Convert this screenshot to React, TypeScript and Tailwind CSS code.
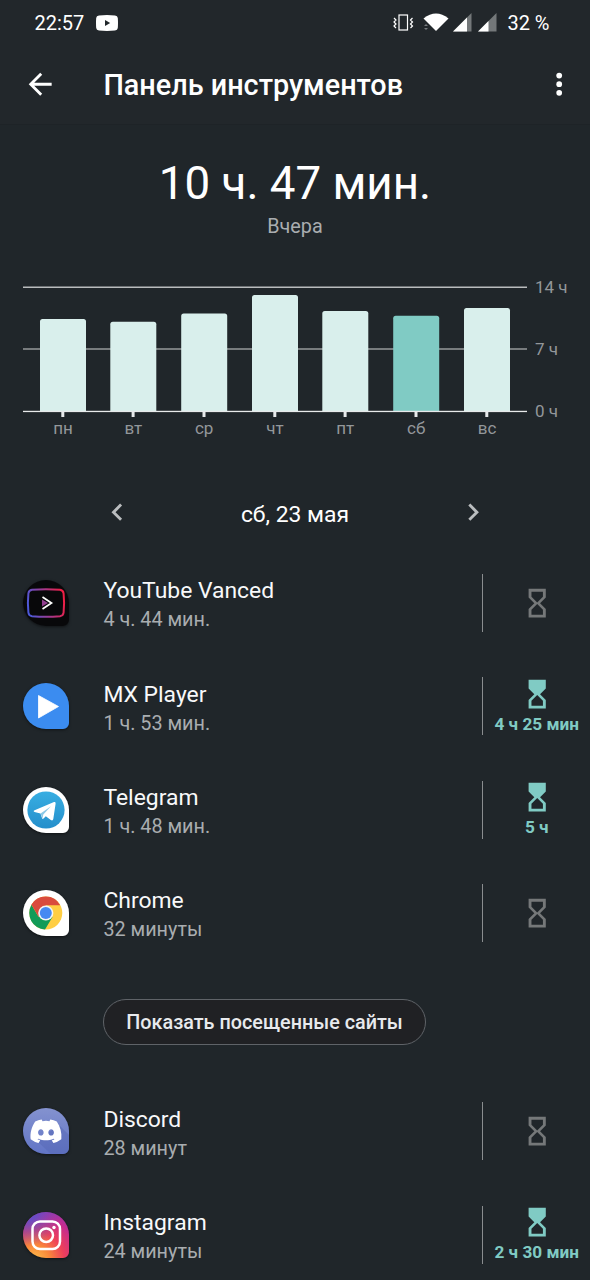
import React from 'react';

interface AppUsage {
  name: string;
  time: string;
  limit?: string;
  icon: React.ReactNode;
}

interface DayUsage {
  label: string;
  x: number;
  top: number;
  selected?: boolean;
}

const days: DayUsage[] = [
  { label: 'пн', x: 40, top: 49 },
  { label: 'вт', x: 110.3, top: 51.7 },
  { label: 'ср', x: 181.2, top: 43.5 },
  { label: 'чт', x: 252, top: 25 },
  { label: 'пт', x: 322.3, top: 41 },
  { label: 'сб', x: 393.2, top: 45.7, selected: true },
  { label: 'вс', x: 464, top: 38 },
];

const VancedIcon = () => (
  <svg viewBox="0 0 46 46" className="h-full w-full">
    <defs>
      <linearGradient id="vanced" x1="0" y1="0.6" x2="1" y2="0.4">
        <stop offset="0" stopColor="#4c58d8" />
        <stop offset="0.5" stopColor="#a03a90" />
        <stop offset="1" stopColor="#ef1f45" />
      </linearGradient>
    </defs>
    <path d="M9 9.800Q23 8.600 37 9.800Q40.300 10.300 40.600 13.500Q41.600 23 40.600 32.500Q40.300 35.700 37 36.200Q23 37.400 9 36.200Q5.700 35.700 5.400 32.500Q4.400 23 5.400 13.500Q5.700 10.300 9 9.800Z" fill="none" stroke="url(#vanced)" strokeWidth="2" />
    <path d="M19 19.500L25 23L19 26.500Z" fill="#92408f" />
    <path d="M19.500 17L28.500 23L19.500 29" fill="none" stroke="#fff" strokeWidth="1.700" />
  </svg>
);

const MxIcon = () => (
  <svg viewBox="0 0 46 46" className="h-full w-full">
    <path d="M15.500 12.500L35.500 23.500L15.500 35Z" fill="#fff" stroke="#fff" strokeWidth="0.8" strokeLinejoin="round" />
  </svg>
);

const TelegramIcon = () => (
  <svg viewBox="0 0 46 46" className="h-full w-full">
    <defs>
      <linearGradient id="telegram" x1="0" y1="0" x2="0" y2="1">
        <stop offset="0" stopColor="#38aee2" />
        <stop offset="1" stopColor="#258fcb" />
      </linearGradient>
    </defs>
    <circle cx="23" cy="23" r="18.600" fill="url(#telegram)" />
    <path d="M11 23.500L31 15Q33 14.500 32.600 16.800L30.300 32Q29.800 34.200 27.800 33L22.800 29.200L20.500 31.600Q19.500 32.500 19 31L17.500 26.500L11.500 25Q10 24.300 11 23.500Z" fill="#fff" />
    <path d="M17.500 26.500L28 19.300L20.300 27.400L19.500 31.600Z" fill="#8cc8e6" />
  </svg>
);

const ChromeIcon = () => (
  <svg viewBox="0 0 46 46" className="h-full w-full">
    <circle cx="22.800" cy="23" r="16.500" fill="#ffce43" />
    <path d="M22.800 23L8.500 14.700A16.500 16.500 0 0 1 37.200 15.200H22.800Z" fill="#d94b3d" />
    <path d="M8.500 14.700A16.500 16.500 0 0 0 22 39.500L29.500 27L22.800 23L15.500 26.800Z" fill="#129b58" />
    <path d="M8.500 14.700L15.500 26.800L22.800 15.200L12 11Z" fill="#d94b3d" />
    <circle cx="22.800" cy="23" r="7.600" fill="#f4f4f4" />
    <circle cx="22.800" cy="23" r="6" fill="#4689f2" />
  </svg>
);

const DiscordIcon = () => (
  <svg viewBox="0 0 46 46" className="h-full w-full">
    <path d="M12 31L28 46H46V27L37 18Z" fill="#5668b6" opacity="0.5" />
    <path
      transform="translate(7.500 7.800) scale(1.290)"
      d="M20.317 4.370a19.791 19.791 0 0 0-4.885-1.515.074.074 0 0 0-.079.037c-.21.375-.444.864-.608 1.250a18.270 18.270 0 0 0-5.487 0 12.640 12.640 0 0 0-.617-1.250.077.077 0 0 0-.079-.037A19.736 19.736 0 0 0 3.677 4.370a.07.07 0 0 0-.032.027C.533 9.046-.32 13.580.099 18.057a.082.082 0 0 0 .031.057 19.900 19.900 0 0 0 5.993 3.030.078.078 0 0 0 .084-.028c.462-.63.874-1.295 1.226-1.994a.076.076 0 0 0-.041-.106 13.107 13.107 0 0 1-1.872-.892.077.077 0 0 1-.008-.128c.126-.094.252-.192.372-.292a.074.074 0 0 1 .077-.01c3.928 1.793 8.180 1.793 12.062 0a.074.074 0 0 1 .078.01c.12.098.246.198.373.292a.077.077 0 0 1-.006.127 12.299 12.299 0 0 1-1.873.892.077.077 0 0 0-.041.107c.36.698.772 1.362 1.225 1.993a.076.076 0 0 0 .084.028 19.839 19.839 0 0 0 6.002-3.030.077.077 0 0 0 .032-.054c.5-5.177-.838-9.674-3.549-13.660a.061.061 0 0 0-.031-.030zM8.020 15.330c-1.183 0-2.157-1.085-2.157-2.419 0-1.333.956-2.419 2.157-2.419 1.210 0 2.176 1.096 2.157 2.420 0 1.333-.956 2.418-2.157 2.418zm7.975 0c-1.183 0-2.157-1.085-2.157-2.419 0-1.333.955-2.419 2.157-2.419 1.210 0 2.176 1.096 2.157 2.420 0 1.333-.946 2.418-2.157 2.418z"
      fill="#fff"
    />
  </svg>
);

const InstagramIcon = () => (
  <svg viewBox="0 0 46 46" className="h-full w-full" fill="none" stroke="#fff">
    <rect x="9.500" y="9.500" width="27.500" height="27.500" rx="7.500" strokeWidth="2.500" />
    <circle cx="23.200" cy="23.200" r="6.800" strokeWidth="2.500" />
    <circle cx="31" cy="15.500" r="1.700" fill="#fff" stroke="none" />
  </svg>
);

const apps: AppUsage[] = [
  { name: 'YouTube Vanced', time: '4 ч. 44 мин.', icon: <div className="h-full w-full bg-[#08080a]"><VancedIcon /></div> },
  { name: 'MX Player', time: '1 ч. 53 мин.', limit: '4 ч 25 мин', icon: <div className="h-full w-full bg-[#3b8cf0]"><MxIcon /></div> },
  { name: 'Telegram', time: '1 ч. 48 мин.', limit: '5 ч', icon: <div className="h-full w-full bg-white"><TelegramIcon /></div> },
  { name: 'Chrome', time: '32 минуты', icon: <div className="h-full w-full bg-white"><ChromeIcon /></div> },
];

const moreApps: AppUsage[] = [
  { name: 'Discord', time: '28 минут', icon: <div className="h-full w-full bg-linear-to-b from-[#8492cf] to-[#6275c6]"><DiscordIcon /></div> },
  {
    name: 'Instagram',
    time: '24 минуты',
    limit: '2 ч 30 мин',
    icon: (
      <div className="h-full w-full bg-[radial-gradient(circle_at_25%_105%,#fdc04d_0%,#fa8a3a_25%,#ee3f5a_50%,#c62c8e_75%,#8a38b8_100%)]">
        <div className="h-full w-full bg-[radial-gradient(circle_at_10%_0%,#4a55d8_0%,#4a55d800_55%)]">
          <InstagramIcon />
        </div>
      </div>
    ),
  },
];

const Hourglass: React.FC<{ active: boolean }> = ({ active }) => (
  <svg viewBox="0 0 24 24" className={active ? 'h-[34.4px] w-[34.4px] fill-[#80cbc4]' : 'h-[34.4px] w-[34.4px] fill-[#757879]'}>
    {active ? (
      <path d="M6 2v6l4 4-4 4v6h12v-6l-4-4 4-4V2H6zm10 14.500V20H8v-3.500l4-4 4 4z" />
    ) : (
      <path d="M6 2v6l4 4-4 4v6h12v-6l-4-4 4-4V2H6zm10 14.500V20H8v-3.500l4-4 4 4zm-4-5l-4-4V4h8v3.500l-4 4z" />
    )}
  </svg>
);

const AppRow: React.FC<{ app: AppUsage }> = ({ app }) => (
  <div className="flex h-[103.3px] items-center pl-[23px]">
    <div className="h-[46px] w-[46px] overflow-hidden rounded-[23px] rounded-br-[6px] shadow-[0_1px_3px_rgba(0,0,0,0.5)]">{app.icon}</div>
    <div className="ml-[34.4px] flex-1 pt-[3.6px]">
      <div className="text-[22.9px] leading-[30px] text-[#f8f9fa]">{app.name}</div>
      <div className="text-[19.8px] leading-[27px] text-[#a9adb0]">{app.time}</div>
    </div>
    <div className="h-[58px] w-[1.5px] bg-[#8a8d8f]" />
    <div className="flex w-[106.6px] flex-col items-center">
      <Hourglass active={!!app.limit} />
      {app.limit && <div className="mt-px text-[17.2px] leading-[24px] font-bold whitespace-nowrap text-[#80cbc4]">{app.limit}</div>}
    </div>
  </div>
);

const StatusBar = () => (
  <div className="flex h-[45px] items-center pr-[40.5px] pl-[34.5px] text-[20px] text-white">
    <span>22:57</span>
    <svg viewBox="0 0 22 16" className="ml-[11.5px] h-4 w-[22px]">
      <path d="M3 .4Q11-.4 19 .4Q21.600.6 21.800 3Q22.200 8 21.800 13Q21.600 15.400 19 15.600Q11 16.400 3 15.600Q.4 15.400.2 13Q-.2 8 .2 3Q.4.6 3 .4Z" fill="#fff" />
      <path d="M9 5L14.200 8L9 11Z" fill="#22272b" />
    </svg>
    <div className="flex-1" />
    <svg viewBox="0 0 106 20" className="mr-[8.5px] h-5 w-[106px]">
      <rect x="6" y="2" width="8.500" height="15" fill="none" stroke="#fff" strokeWidth="1.200" />
      <path d="M1 5L3 7L1 9L3 11L1 13L3 15M19.500 5L17.500 7L19.500 9L17.500 11L19.500 13L17.500 15" fill="none" stroke="#fff" strokeWidth="1.200" />
      <path d="M30.500 5.500Q43 -4.500 55.500 5.500L43 18Z" fill="#fff" />
      <path d="M31 13L33 11L35 13ZM31 15L33 17L35 15Z" fill="#777b7e" />
      <path d="M60 18.500L78.500 0V18.500Z" fill="#74787a" />
      <path d="M60 18.500L74 4.500V18.500Z" fill="#fff" />
      <path d="M85 18.500L103.500 0V18.500Z" fill="#74787a" />
      <path d="M85 18.500L95.500 8V18.500Z" fill="#fff" />
    </svg>
    <span>32 %</span>
  </div>
);

const UsageChart = () => (
  <svg width="590" height="180" viewBox="0 0 590 180" className="block">
    <rect x="23" y="16.500" width="504" height="1.500" fill="#b9bcbd" />
    <rect x="23" y="78.200" width="504" height="1.600" fill="#8e9293" />
    {days.map((day) => (
      <g key={day.label}>
        <path
          d={`M${day.x} 141.500V${day.top + 2.5}q0-2.500 2.500-2.500h41q2.500 0 2.500 2.500V141.500z`}
          fill={day.selected ? '#80cbc4' : '#d9efec'}
        />
        <rect x={day.x + 21.3} y="141" width="3" height="6" fill="#e8eaeb" />
        <text x={day.x + 23} y="164" textAnchor="middle" fontSize="17" fill="#93979a">{day.label}</text>
      </g>
    ))}
    <rect x="23" y="140.800" width="504" height="1.300" fill="#e8eaeb" />
    <g fontSize="17" fill="#93979a">
      <text x="535" y="23">14 ч</text>
      <text x="535" y="85">7 ч</text>
      <text x="535" y="147">0 ч</text>
    </g>
  </svg>
);

const App: React.FC = () => {
  return (
    <div className="h-[1280px] w-[590px] overflow-hidden bg-[#20262a] font-['Roboto',sans-serif]">
      <header className="h-[125px] border-b border-[#1e2327] bg-[#22272b]">
        <StatusBar />
        <div className="flex h-[79px] items-center pr-[14px] pl-[23px]">
          <svg viewBox="0 0 24 24" className="h-[34.4px] w-[34.4px] fill-white">
            <path d="M20 11H7.830l5.590-5.590L12 4l-8 8 8 8 1.410-1.410L7.830 13H20v-2z" />
          </svg>
          <h1 className="ml-[46px] flex-1 pt-[3px] text-[28.800px] font-medium text-white">Панель инструментов</h1>
          <svg viewBox="0 0 24 24" className="h-[34.4px] w-[34.4px] fill-white">
            <circle cx="12" cy="6" r="2" />
            <circle cx="12" cy="12" r="2" />
            <circle cx="12" cy="18" r="2" />
          </svg>
        </div>
      </header>

      <section className="h-[145px] pt-[30px] text-center">
        <div className="text-[45.7px] leading-[58px] text-white">10 ч. 47 мин.</div>
        <div className="text-[19.8px] leading-[28px] text-[#a9adb0]">Вчера</div>
      </section>

      <UsageChart />

      <div className="flex h-[101.5px] items-start justify-between px-[100px] pt-[45px]">
        <svg viewBox="0 0 24 24" className="h-[34.4px] w-[34.4px] fill-[#babdbf]">
          <path d="M15.410 7.410L14 6l-6 6 6 6 1.410-1.410L10.830 12z" />
        </svg>
        <span className="text-[22.9px] leading-[39px] text-white">сб, 23 мая</span>
        <svg viewBox="0 0 24 24" className="h-[34.4px] w-[34.4px] fill-[#babdbf]">
          <path d="M10 6L8.590 7.410 13.170 12l-4.580 4.590L10 18l6-6z" />
        </svg>
      </div>

      {apps.map((app) => (
        <AppRow key={app.name} app={app} />
      ))}

      <div className="flex h-[114.9px] items-center pl-[103px]">
        <button className="h-[46px] w-[323px] rounded-full border-[1.5px] border-[#5f6368] bg-[#202124] pt-[2px] text-[19.8px] font-medium whitespace-nowrap text-[#e8eaed]">
          Показать посещенные сайты
        </button>
      </div>

      {moreApps.map((app) => (
        <AppRow key={app.name} app={app} />
      ))}
    </div>
  );
};

export default App;
